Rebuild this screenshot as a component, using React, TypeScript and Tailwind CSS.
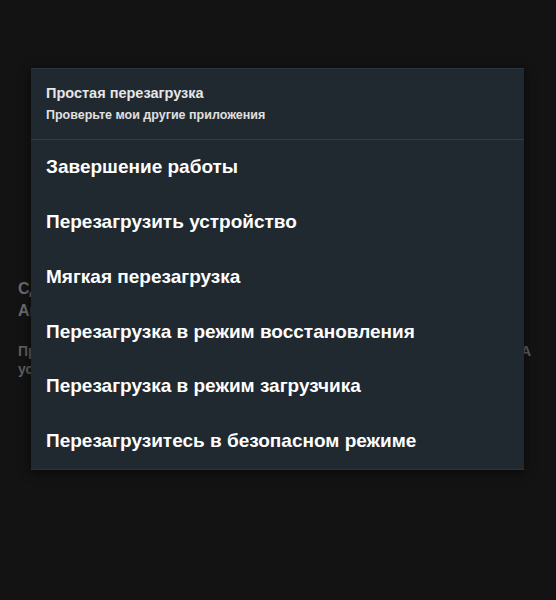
import React from "react";

const options = [
  "Завершение работы",
  "Перезагрузить устройство",
  "Мягкая перезагрузка",
  "Перезагрузка в режим восстановления",
  "Перезагрузка в режим загрузчика",
  "Перезагрузитесь в безопасном режиме",
];

export default function App() {
  return (
    <div
      className="relative w-[556px] h-[600px] bg-[#131313] overflow-hidden"
      style={{ fontFamily: '"Liberation Sans", Arial, sans-serif' }}
    >
      {/* Page behind the dialog */}
      <div className="pt-[278px] pl-[18px] pr-[25px]">
        <h1 className="text-[16px] leading-[22px] font-bold text-[#6a6a6a]">
          Сделайте быструю перезагрузку
          <br />
          Android устройства
        </h1>
        <div className="mt-[20px] text-[14px] leading-[18px] font-bold text-[#5e5e5e]">
          <div className="flex justify-between">
            <span>Приложение позволяет перезагрузить телефон</span>
            <span>А</span>
          </div>
          <div>устройство без лишних действий</div>
        </div>
      </div>

      {/* Dialog */}
      <div className="absolute left-[31px] top-[68px] w-[493px] bg-[#212930] border-t border-[#2e373e] border-b border-b-[#2c343b] shadow-[0_2px_10px_rgba(0,0,0,0.6)]">
        <div className="h-[71px] pl-[15px] pt-[15px] border-b border-[#343d44]">
          <div className="text-[14.5px] leading-[18px] font-bold text-[#e6e6e6]">
            Простая перезагрузка
          </div>
          <div className="mt-[5px] text-[12.5px] leading-[16px] font-bold text-[#e0e0e0]">
            Проверьте мои другие приложения
          </div>
        </div>
        <ul>
          {options.map((o) => (
            <li
              key={o}
              className="h-[54.8px] flex items-center pl-[15px] text-[19px] font-bold text-white"
            >
              {o}
            </li>
          ))}
        </ul>
      </div>
    </div>
  );
}
